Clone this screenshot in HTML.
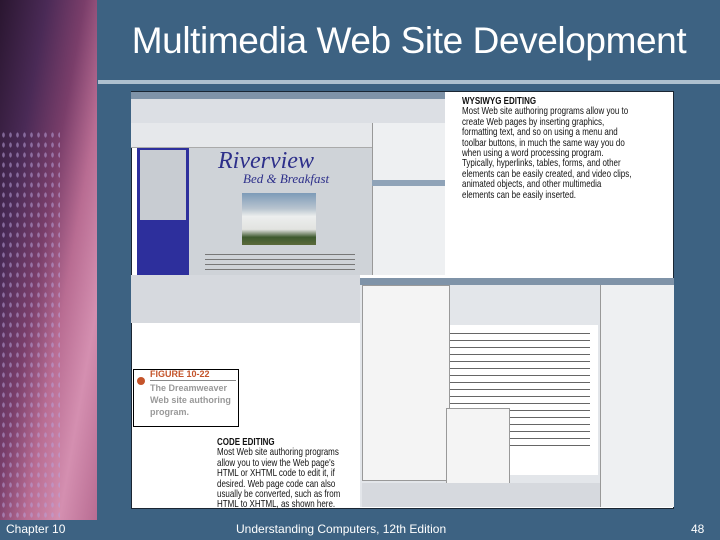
<!DOCTYPE html>
<html style="width:720px;height:540px;overflow:hidden"><head><meta charset="utf-8"><style>
*{margin:0;padding:0;box-sizing:border-box}
body{width:720px;height:540px;background:#3d6282;position:relative;overflow:hidden;font-family:"Liberation Sans",sans-serif}
.a{position:absolute}
.strip{left:0;top:0;width:97px;height:520px;background:linear-gradient(100deg,#2a1630 0%,#4a2a56 25%,#7a3e6a 45%,#b86c92 62%,#d48fb0 80%,#b86c92 100%)}
.dots{left:0;top:130px;width:60px;height:390px;background-image:radial-gradient(ellipse 2px 4px,#b8a0d8 60%,transparent 70%);background-size:7px 10px;opacity:.55}
.title{left:98px;top:20px;width:622px;text-align:center;color:#fff;font-size:37px;letter-spacing:-.4px}
.line{left:98px;top:80px;width:622px;height:4px;background:#aec0cf}
.box{left:131px;top:91px;width:543px;height:418px;background:#fff;border:1px solid #1a2633}
.foot{color:#fff;font-size:12px;top:522px}
.t{font-family:"Liberation Sans",sans-serif;color:#111;font-size:10.5px;line-height:10.4px;transform:scaleX(.76);transform-origin:0 0;white-space:nowrap}
</style></head><body>
<div class="a strip"></div><div class="a dots"></div>
<div class="a title">Multimedia Web Site Development</div>
<div class="a line"></div>
<div class="a box"></div>
<div class="a" style="left:131px;top:92px;width:314px;height:7px;background:#7f93a8"></div>
<div class="a" style="left:131px;top:99px;width:314px;height:24px;background:#dcdfe4"></div>
<div class="a" style="left:131px;top:123px;width:241px;height:25px;background:#e6e8eb;border-bottom:1px solid #aaa"></div>
<div class="a" style="left:137px;top:148px;width:52px;height:127px;background:#2d2f9c"></div>
<div class="a" style="left:140px;top:150px;width:46px;height:70px;background:#c8ccd2"></div>
<div class="a" style="left:189px;top:148px;width:183px;height:127px;background:#cfd3d8"></div>
<div class="a" style="left:218px;top:148px;font-family:'Liberation Serif',serif;font-style:italic;color:#2d2f8a;font-size:24px">Riverview</div>
<div class="a" style="left:243px;top:171px;font-family:'Liberation Serif',serif;font-style:italic;color:#2d2f8a;font-size:13px">Bed &amp; Breakfast</div>
<div class="a" style="left:242px;top:193px;width:74px;height:52px;background:linear-gradient(#7d9bb8 0,#b8c4cf 30%,#eceeee 45%,#e2e3e0 70%,#3e5a2e 85%,#5b6a3b 100%)"></div>
<div class="a" style="left:205px;top:252px;width:150px;height:18px;background:repeating-linear-gradient(#cfd3d8 0 2px,#777 2px 3px,#cfd3d8 3px 5px)"></div>
<div class="a" style="left:372px;top:123px;width:73px;height:152px;background:#eef0f2;border-left:1px solid #999"></div>
<div class="a" style="left:372px;top:180px;width:73px;height:6px;background:#8fa3b8"></div>
<div class="a" style="left:131px;top:275px;width:229px;height:48px;background:#d6d9de"></div>
<div class="a" style="left:360px;top:278px;width:314px;height:7px;background:#7f93a8"></div>
<div class="a" style="left:360px;top:285px;width:314px;height:222px;background:#e3e6ea"></div>
<div class="a" style="left:446px;top:325px;width:152px;height:150px;background:#fff"></div>
<div class="a" style="left:450px;top:330px;width:140px;height:120px;background:repeating-linear-gradient(#fff 0 3px,#666 3px 4px,#fff 4px 7px)"></div>
<div class="a" style="left:362px;top:285px;width:88px;height:196px;background:#f4f4f4;border:1px solid #999"></div>
<div class="a" style="left:446px;top:408px;width:64px;height:88px;background:#f4f4f4;border:1px solid #999"></div>
<div class="a" style="left:600px;top:285px;width:74px;height:222px;background:#eef0f2;border-left:1px solid #999"></div>
<div class="a" style="left:362px;top:483px;width:238px;height:24px;background:#d6d9de"></div>
<div class="a t" style="left:462px;top:96px"><b>WYSIWYG EDITING</b><br>Most Web site authoring programs allow you to<br>create Web pages by inserting graphics,<br>formatting text, and so on using a menu and<br>toolbar buttons, in much the same way you do<br>when using a word processing program.<br>Typically, hyperlinks, tables, forms, and other<br>elements can be easily created, and video clips,<br>animated objects, and other multimedia<br>elements can be easily inserted.</div>
<div class="a" style="left:133px;top:369px;width:106px;height:58px;border:1px solid #000;background:#fff"></div>
<div class="a" style="left:137px;top:377px;width:8px;height:8px;border-radius:50%;background:#c4542a"></div>
<div class="a" style="left:150px;top:369px;color:#c4542a;font-size:9px;font-weight:bold">FIGURE 10-22</div>
<div class="a" style="left:150px;top:380px;width:86px;height:1px;background:#888"></div>
<div class="a" style="left:150px;top:382px;color:#999;font-size:9px;font-weight:bold;line-height:12px">The Dreamweaver<br>Web site authoring<br>program.</div>
<div class="a t" style="left:217px;top:437px"><b>CODE EDITING</b><br>Most Web site authoring programs<br>allow you to view the Web page's<br>HTML or XHTML code to edit it, if<br>desired. Web page code can also<br>usually be converted, such as from<br>HTML to XHTML, as shown here.</div>
<div class="a foot" style="left:6px">Chapter 10</div>
<div class="a foot" style="left:236px">Understanding Computers, 12th Edition</div>
<div class="a foot" style="left:691px">48</div>
</body></html>
